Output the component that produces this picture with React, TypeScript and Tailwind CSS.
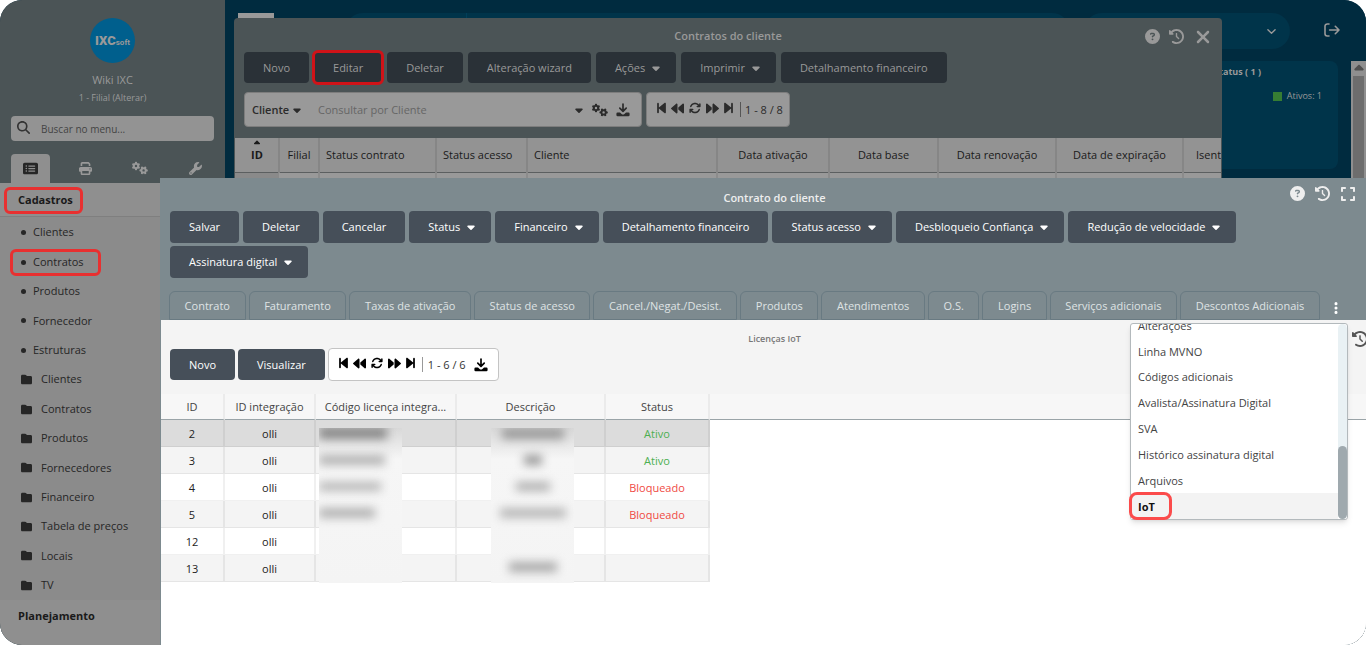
import type { ReactNode } from "react";
import {
  FaArrowsRotate,
  FaBackward,
  FaBackwardStep,
  FaCaretDown,
  FaCaretUp,
  FaCircleQuestion,
  FaClockRotateLeft,
  FaEllipsisVertical,
  FaExpand,
  FaFolder,
  FaForward,
  FaForwardStep,
  FaGears,
  FaMagnifyingGlass,
  FaPrint,
  FaRectangleList,
  FaWrench,
  FaXmark,
} from "react-icons/fa6";

type Action = { label: string; menu?: boolean; marked?: boolean };

const shortcuts = ["Clientes", "Contratos", "Produtos", "Fornecedor", "Estruturas"];
const folders = ["Clientes", "Contratos", "Produtos", "Fornecedores", "Financeiro", "Tabela de preços", "Locais", "TV"];

const listActions: Action[] = [
  { label: "Novo" },
  { label: "Editar", marked: true },
  { label: "Deletar" },
  { label: "Alteração wizard" },
  { label: "Ações", menu: true },
  { label: "Imprimir", menu: true },
  { label: "Detalhamento financeiro" },
];

const formActions: Action[] = [
  { label: "Salvar" },
  { label: "Deletar" },
  { label: "Cancelar" },
  { label: "Status", menu: true },
  { label: "Financeiro", menu: true },
  { label: "Detalhamento financeiro" },
  { label: "Status acesso", menu: true },
  { label: "Desbloqueio Confiança", menu: true },
  { label: "Redução de velocidade", menu: true },
  { label: "Assinatura digital", menu: true },
];

const tabs = [
  "Contrato",
  "Faturamento",
  "Taxas de ativação",
  "Status de acesso",
  "Cancel./Negat./Desist.",
  "Produtos",
  "Atendimentos",
  "O.S.",
  "Logins",
  "Serviços adicionais",
  "Descontos Adicionais",
];

const moreTabs = [
  "Alterações",
  "Linha MVNO",
  "Códigos adicionais",
  "Avalista/Assinatura Digital",
  "SVA",
  "Histórico assinatura digital",
  "Arquivos",
  "IoT",
];

const licenses = [
  { id: 2, status: "Ativo" },
  { id: 3, status: "Ativo" },
  { id: 4, status: "Bloqueado" },
  { id: 5, status: "Bloqueado" },
  { id: 12, status: "" },
  { id: 13, status: "" },
];

function DownloadIcon({ className }: { className: string }) {
  return (
    <svg viewBox="0 0 14 14" className={className} fill="none" aria-hidden="true">
      <path d="M7 1v7M3.8 5.2 7 8.4l3.2-3.2" stroke="currentColor" strokeWidth="1.7" strokeLinecap="round" strokeLinejoin="round" />
      <path d="M1.6 9.6h2.4L5.600 10.900a2 2 0 0 0 2.800 0L10 9.600h2.400A1.200 1.200 0 0 1 13.600 10.800v1.300a1.200 1.200 0 0 1-1.200 1.200H1.600A1.200 1.200 0 0 1 .4 12.100v-1.300a1.200 1.200 0 0 1 1.200-1.200Z" fill="currentColor" />
    </svg>
  );
}

function LogoutIcon() {
  return (
    <svg viewBox="0 0 16 14" className="h-[14px] w-4" fill="none" stroke="currentColor" strokeWidth="1.600" strokeLinecap="round" strokeLinejoin="round" aria-hidden="true">
      <path d="M5 1H3.200A2.200 2.200 0 0 0 1 3.200v7.600A2.200 2.200 0 0 0 3.200 13H5M5.600 7H15M11.300 3.300 15 7l-3.700 3.700" />
    </svg>
  );
}

function PagerIcons() {
  return (
    <div className="flex items-center gap-[5px] pb-[3px]">
      <button aria-label="Primeira página"><FaBackwardStep className="h-[14px] w-[9px]" /></button>
      <button aria-label="Página anterior"><FaBackward className="size-[13px]" /></button>
      <button aria-label="Atualizar"><FaArrowsRotate className="size-3" /></button>
      <button aria-label="Próxima página"><FaForward className="size-[13px]" /></button>
      <button aria-label="Última página"><FaForwardStep className="h-[14px] w-[9px]" /></button>
    </div>
  );
}

function SidebarTab({ label, children }: { label: string; children: ReactNode }) {
  return (
    <button aria-label={label} className="flex h-7 w-10 items-center justify-center text-[#999]">
      {children}
    </button>
  );
}

function Sidebar() {
  return (
    <aside className="flex w-[225px] shrink-0 flex-col bg-[#4b5456]">
      <div className="flex flex-col items-center pt-[18px] text-[#999]">
        <div className="flex size-[45px] items-center justify-center rounded-full bg-[#005f8d] font-[Roboto] leading-none">
          <span className="flex items-baseline">
            <span className="text-[13px] font-black leading-none">IXC</span>
            <span className="text-[8px] font-bold leading-none">soft</span>
          </span>
        </div>
        <p className="mt-2 text-[11px] leading-[18px]">Wiki IXC</p>
        <button className="text-[9px] leading-[18px]">1 - Filial (Alterar)</button>
      </div>
      <label className="mx-[11px] mt-[9px] flex h-[25px] items-center gap-[11px] rounded bg-[#939393] px-[6px] text-[#333]">
        <FaMagnifyingGlass className="mb-[3px] size-[13px]" />
        <input aria-label="Buscar no menu" placeholder="Buscar no menu..." className="min-w-0 flex-1 bg-transparent pt-px text-[10px] outline-none placeholder:text-[#444]" />
      </label>
      <div className="ml-[11px] mr-[10px] mt-[13px] flex h-[29px] justify-between">
        <button aria-label="Cadastros" className="flex w-[39px] items-center justify-center rounded-t bg-[#8f8f8f] text-[#262626]">
          <FaRectangleList className="size-[15px]" />
        </button>
        <SidebarTab label="Impressões"><FaPrint className="size-[13px]" /></SidebarTab>
        <SidebarTab label="Configurações"><FaGears className="size-4" /></SidebarTab>
        <SidebarTab label="Ferramentas"><FaWrench className="size-[13px]" /></SidebarTab>
      </div>
      <nav className="flex flex-1 flex-col bg-[#8f8f8f] text-[11px] text-[#262626]">
        <div className="flex h-[34px] items-center border-b border-[#7f7f7f] pl-1 pt-[2px]">
          <a href="#cadastros" className="flex h-[27px] items-center rounded-md border-3 border-[#e83030] pl-[11px] pr-[7px] font-bold text-[#1a1a1a]">Cadastros</a>
        </div>
        <ul className="flex h-[383px] flex-col bg-[#8b8b8b] pt-px">
          {shortcuts.map((name) => (
            <li key={name} className="flex flex-1 items-center pl-[10px]">
              <a
                href={"#" + name}
                className={
                  "flex h-[27px] items-center gap-[7px] rounded-md border-3 pl-2 pr-[14px] " +
                  (name === "Contratos" ? "border-[#e83030]" : "border-transparent")
                }
              >
                <span className="size-[5px] rounded-full bg-[#262626]" />
                {name}
              </a>
            </li>
          ))}
          {folders.map((name) => (
            <li key={name} className="flex flex-1 items-center pl-[21px]">
              <a href={"#pasta-" + name} className="flex items-center gap-[9px]">
                <FaFolder className="size-[11px]" />
                {name}
              </a>
            </li>
          ))}
        </ul>
        <a href="#planejamento" className="pl-[18px] text-[11px] font-bold leading-[32px] text-[#1a1a1a]">Planejamento</a>
      </nav>
    </aside>
  );
}

function Dashboard() {
  return (
    <main className="flex flex-1 flex-col bg-[#002b3f] text-[#999]">
      <header className="flex h-[61px] items-start pt-[13px]">
        <div className="ml-[13px] h-[36px] w-9 bg-[#999]" />
        <div className="ml-[71px] flex h-9 flex-1 rounded-full bg-[#00344a]">
          <div className="w-[122px] border-r border-[#003f5a]" />
        </div>
        <button aria-label="Perfil" className="ml-[14px] flex h-9 w-[206px] items-center justify-end rounded-full bg-[#00344a] pr-[14px]">
          <svg viewBox="0 0 10 10" className="size-[9px]" fill="none" stroke="currentColor" strokeWidth="1.500" strokeLinecap="round" strokeLinejoin="round">
            <path d="m1 3 4 4 4-4" />
          </svg>
        </button>
        <button aria-label="Sair" className="ml-[34px] mr-[26px] mt-[10px]"><LogoutIcon /></button>
      </header>
      <div className="flex flex-1 justify-end">
        <section className="mr-[13px] flex h-[108px] w-[180px] flex-col items-end rounded-lg bg-[#00344a]">
          <h2 className="mr-[77px] mt-[3px] text-[9px] font-bold leading-4">Status ( 1 )</h2>
          <p className="mr-4 mt-2 flex items-center gap-[5px] text-[9px] leading-4">
            <span className="size-[9px] bg-[#367d33]" />
            Ativos: 1
          </p>
        </section>
        <div className="flex w-[15px] flex-col items-center bg-[#8f8f8f]">
          <FaCaretUp className="h-[15px] w-3 text-[#4f4f4f]" />
          <div className="w-[11px] flex-1 bg-[#6d6d6d]" />
        </div>
      </div>
    </main>
  );
}

const contractHead = "relative border-r-2 border-[#868686] p-0 font-normal";

function ContractsWindow() {
  return (
    <section className="absolute left-[234px] right-36 top-[18px] overflow-hidden rounded-t bg-[#4b5456]">
      <div className="grid h-[34px] grid-cols-[1fr_auto_1fr] items-center text-[#999]">
        <span />
        <h1 className="pt-[2px] text-[11px] font-semibold">Contratos do cliente</h1>
        <div className="flex items-center justify-end gap-[9px] pr-[9px] pt-[3px]">
          <button aria-label="Ajuda"><FaCircleQuestion className="size-[15px]" /></button>
          <button aria-label="Histórico"><FaClockRotateLeft className="size-[15px]" /></button>
          <button aria-label="Fechar"><FaXmark className="size-5" /></button>
        </div>
      </div>
      <div className="flex gap-[5px] px-[10px]">
        {listActions.map((a) => (
          <button
            key={a.label}
            className={
              "flex h-[31px] items-center gap-[7px] rounded bg-[#2a3137] pl-[19px] pt-px text-[11px] font-medium text-[#999] " +
              (a.menu ? "pr-4 " : "pr-[19px] ") +
              (a.marked ? "outline-3 -outline-offset-1 outline-[#d01318]" : "")
            }
          >
            {a.label}
            {a.menu && <FaCaretDown className="h-3 w-2" />}
          </button>
        ))}
      </div>
      <div className="mt-[9px] flex gap-1 px-[10px] pb-[11px] text-[11px] text-[#2b2b2b]">
        <div className="flex h-[35px] w-[398px] items-center rounded border border-[#7d7d7d] bg-[#999] px-[7px]">
          <label className="flex items-center gap-[3px] pt-px font-semibold">
            <select aria-label="Campo" className="appearance-none bg-transparent font-semibold outline-none">
              <option>Cliente</option>
            </select>
            <FaCaretDown className="h-3 w-2" />
          </label>
          <input aria-label="Consultar por Cliente" placeholder="Consultar por Cliente" className="ml-[17px] min-w-0 flex-1 bg-transparent pt-px outline-none placeholder:text-[#666]" />
          <button aria-label="Opções"><FaCaretDown className="size-3" /></button>
          <button aria-label="Filtros" className="ml-[7px]"><FaGears className="size-4" /></button>
          <button aria-label="Baixar" className="ml-2 mr-1"><DownloadIcon className="size-[14px]" /></button>
        </div>
        <div className="flex h-[35px] items-center rounded border border-[#7d7d7d] bg-[#999] pl-[10px] pr-[6px]">
          <PagerIcons />
          <span className="ml-[7px] border-l border-[#555] pl-1 leading-[15px]">1 - 8 / 8</span>
        </div>
      </div>
      <div className="ml-px mr-px overflow-hidden">
        <table className="w-[1060px] table-fixed border-collapse bg-[#939393] text-[11px] text-[#1a1a1a]">
          <colgroup>
            <col className="w-[44px]" />
            <col className="w-[40px]" />
            <col className="w-[117px]" />
            <col className="w-[91px]" />
            <col className="w-[190px]" />
            <col className="w-[112px]" />
            <col className="w-[109px]" />
            <col className="w-[118px]" />
            <col className="w-[127px]" />
            <col />
          </colgroup>
          <thead>
            <tr className="h-[34px] border-b border-[#5c5f60]">
              <th className="relative border-r-2 border-[#868686] p-0 pl-px font-bold">
                <FaCaretUp className="absolute left-[17px] top-0 size-[10px]" />
                ID
              </th>
              <th className={contractHead}>Filial</th>
              <th className={contractHead + " pl-[6px] text-left"}>Status contrato</th>
              <th className={contractHead + " pl-[6px] text-left"}>Status acesso</th>
              <th className={contractHead + " pl-[6px] text-left"}>Cliente</th>
              <th className={contractHead}>Data ativação</th>
              <th className={contractHead}>Data base</th>
              <th className={contractHead}>Data renovação</th>
              <th className={contractHead}>Data de expiração</th>
              <th className={contractHead + " pl-[12px] text-left"}>Isento</th>
            </tr>
          </thead>
          <tbody>
            <tr className="h-[10px] bg-[#999]">
              <td className="bg-[#8a8a8a]" />
              {[1, 2, 3, 4, 5, 6, 7, 8, 9].map((n) => (
                <td key={n} className="border-r-2 border-[#8c8c8c] p-0" />
              ))}
            </tr>
          </tbody>
        </table>
      </div>
    </section>
  );
}

const cell = "border-r-2 border-b border-black/6 p-0 pt-[2px]";

function LicenseTable() {
  return (
    <div className="relative flex-1 bg-white">
      <table className="w-full table-fixed border-separate border-spacing-0 text-center text-[11px] text-[#222]">
        <colgroup>
          <col className="w-[64px]" />
          <col className="w-[91px]" />
          <col className="w-[141px]" />
          <col className="w-[149px]" />
          <col className="w-[104px]" />
          <col />
        </colgroup>
        <thead>
          <tr className="h-[26px] bg-[#f7f7f7] text-[#444]">
            {["ID", "ID integração", "Código licença integra...", "Descrição", "Status"].map((name) => (
              <th key={name} className="whitespace-nowrap border-r-2 border-b border-r-[#ebebeb] border-b-[#9aa4a8] p-0 pt-[2px] font-normal">{name}</th>
            ))}
            <td className="border-b border-[#9aa4a8] p-0" />
          </tr>
        </thead>
        <tbody>
          {licenses.map((row, i) => (
            <tr key={row.id} className={"h-[27px] " + (i === 0 ? "bg-[#dcdcdc]" : i % 2 ? "bg-[#f4f4f4]" : "bg-white")}>
              <td className={cell}>{row.id}</td>
              <td className={cell}>olli</td>
              <td className={cell} />
              <td className={cell} />
              <td className={cell + (row.status === "Ativo" ? " text-[#4caf50]" : " text-[#f04a43]")}>{row.status}</td>
            </tr>
          ))}
        </tbody>
      </table>
      <div aria-hidden="true" className="absolute left-[158px] top-[34px] h-[155px] w-[83px] overflow-hidden bg-linear-to-b from-[#d8d8d8] via-[#f6f6f6] via-20% to-[#f4f4f4]">
        <div className="-mt-px h-3 w-[68px] bg-[#888] blur-[5px]" />
        <div className="mt-4 h-[10px] w-[66px] bg-[#b2b2b2] blur-[5px]" />
        <div className="mt-[17px] h-[9px] w-[62px] bg-[#b8b8b8] blur-[5px]" />
        <div className="mt-[17px] h-[10px] w-[56px] bg-[#b2b2b2] blur-[5px]" />
      </div>
      <div aria-hidden="true" className="absolute left-[330px] top-[34px] flex h-[155px] w-[83px] flex-col items-center overflow-hidden bg-linear-to-b from-[#d8d8d8] via-[#f6f6f6] via-20% to-[#f4f4f4]">
        <div className="h-[11px] w-[62px] shrink-0 bg-[#999] blur-[5px]" />
        <div className="mt-4 h-[10px] w-[18px] shrink-0 bg-[#999] blur-[5px]" />
        <div className="mt-[17px] h-[9px] w-[34px] shrink-0 bg-[#b0b0b0] blur-[5px]" />
        <div className="mt-[17px] h-[10px] w-[66px] shrink-0 bg-[#b8b8b8] blur-[5px]" />
        <div className="mt-[44px] h-[10px] w-[48px] shrink-0 bg-[#aaa] blur-[5px]" />
      </div>
    </div>
  );
}

function MoreTabsMenu() {
  return (
    <div className="absolute right-10 top-[145px] flex h-[197px] w-[218px] rounded-[3px] border border-[#b3b9bc] bg-white shadow-md">
      <div className="flex flex-1 flex-col justify-end overflow-hidden">
        <ul className="flex h-[207px] shrink-0 flex-col text-[11px] text-[#444]">
          {moreTabs.map((name) =>
            name === "IoT" ? (
              <li key={name} className="flex flex-1 items-center bg-[#f3f3f3] pl-[7px] pt-[2px] font-bold text-[#111]">
                <a href="#iot">{name}</a>
              </li>
            ) : (
              <li key={name} className="flex flex-1 items-center pl-[7px] pt-[2px]">
                <a href={"#" + name}>{name}</a>
              </li>
            ),
          )}
        </ul>
      </div>
      <div className="flex w-[9px] flex-col justify-end rounded-full bg-[#e9f1f4]">
        <div className="h-[73px] rounded-full bg-[#9fa9ae]" />
      </div>
      <div className="absolute -bottom-px -left-[2px] h-[28px] w-[43px] rounded-lg border-3 border-[#fb4b4b]" />
    </div>
  );
}

function ContractWindow() {
  return (
    <section className="absolute -right-[22px] bottom-0 left-40 top-[178px] flex flex-col bg-[#7d8a8f] pl-px">
      <div className="grid h-[33px] grid-cols-[1fr_auto_1fr] items-center text-[#eee]">
        <span />
        <h1 className="pt-[8px] text-[11px] font-semibold">Contrato do cliente</h1>
        <div className="flex items-center justify-end gap-[10px] pb-[2px] pr-8">
          <button aria-label="Ajuda"><FaCircleQuestion className="size-[15px]" /></button>
          <button aria-label="Histórico"><FaClockRotateLeft className="size-[15px]" /></button>
          <button aria-label="Tela cheia"><FaExpand className="size-4" /></button>
        </div>
      </div>
      <div className="flex flex-wrap gap-x-1 gap-y-[3px] pl-[9px] pr-8">
        {formActions.map((a) => (
          <button
            key={a.label}
            className={
              "flex h-8 items-center gap-[7px] rounded bg-[#464f59] pl-[19px] text-[11px] font-medium text-white " +
              (a.menu ? "pr-4" : "pr-[19px]")
            }
          >
            {a.label}
            {a.menu && <FaCaretDown className="h-3 w-2" />}
          </button>
        ))}
      </div>
      <div className="mt-[13px] flex items-end pl-2 pr-[45px]">
        <div className="flex flex-1 gap-[3px]">
          {tabs.map((name) => (
            <button key={name} className="h-[29px] flex-auto whitespace-nowrap rounded-t-md border border-[#697a82] px-[14px] pt-px text-[11px] text-[#dfe3e4]">
              {name}
            </button>
          ))}
        </div>
        <button aria-label="Mais abas" className="mb-[5px] ml-[9px] text-white"><FaEllipsisVertical className="size-[14px]" /></button>
      </div>
      <div className="flex flex-1 flex-col bg-[#f4f4f4]">
        <div className="relative flex h-[28px] items-center justify-center overflow-hidden pt-[9px]">
          <h2 className="text-[9px] font-semibold text-[#777]">Licenças IoT</h2>
          <button aria-label="Histórico de licenças" className="absolute right-5 top-[11px] text-[#555]">
            <FaClockRotateLeft className="size-4" />
          </button>
        </div>
        <div className="flex items-center gap-[3px] pb-[13px] pl-[9px]">
          <button className="h-[31px] rounded bg-[#464f59] px-[19px] pt-px text-[11px] font-medium text-white">Novo</button>
          <button className="h-[31px] rounded bg-[#464f59] px-[19px] pt-px text-[11px] font-medium text-white">Visualizar</button>
          <div className="flex h-[33px] items-center rounded border border-[#c4c4c4] bg-white px-[10px] text-[11px] text-black">
            <PagerIcons />
            <span className="ml-[7px] border-l border-[#999] pl-[5px] leading-[15px] text-[#333]">1 - 6 / 6</span>
            <button aria-label="Baixar" className="ml-2"><DownloadIcon className="size-[14px]" /></button>
          </div>
        </div>
        <LicenseTable />
      </div>
      <MoreTabsMenu />
    </section>
  );
}

export default function App() {
  return (
    <div className="min-h-screen bg-white">
      <div className="relative flex min-h-screen overflow-hidden rounded-[22px] bg-[#002b3f] font-['Open_Sans','Noto_Sans',sans-serif]">
        <Sidebar />
        <Dashboard />
        <ContractsWindow />
        <ContractWindow />
      </div>
    </div>
  );
}
